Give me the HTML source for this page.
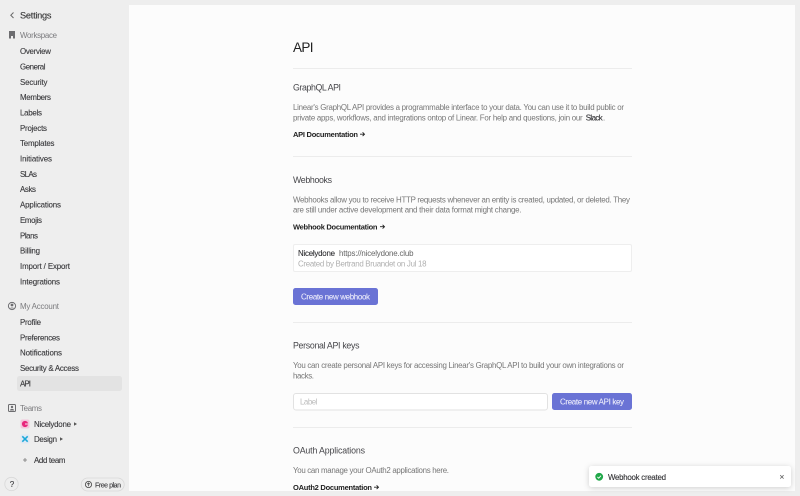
<!DOCTYPE html>
<html><head><meta charset="utf-8"><title>Settings</title>
<style>
html,body{margin:0;padding:0;width:800px;height:496px;overflow:hidden;background:#eeeeee}
svg{display:block;filter:blur(.35px)}
text{font-family:"Liberation Sans",sans-serif;font-size:7.9px;fill:#777}
.n{fill:#3a3a3d;stroke:#3a3a3d;stroke-width:.12px}
.s{fill:#7b7b7e}
.h{font-size:8.8px;fill:#46464a}
.b{font-size:7.5px;fill:#222;font-weight:bold}
.d{fill:#303033;stroke:#303033;stroke-width:.1px}
.w{fill:#e9e9fa;stroke:#e9e9fa;stroke-width:.1px}
.g{fill:#b0b0b0}
.t{filter:drop-shadow(0 1px 3px rgba(0,0,0,.18))}
</style></head><body>
<svg width="800" height="496" viewBox="0 0 800 496" xmlns="http://www.w3.org/2000/svg">
<rect width="800" height="496" fill="#eeeeee"/>
<rect x="129" y="5" width="666" height="486" fill="#fcfcfc"/>

<!-- Sidebar header -->
<path d="M13.5 12.5 L10.8 15.2 L13.5 18" fill="none" stroke="#666" stroke-width="1"/>
<text x="20" y="18.7" class="n" style="font-size:9.2px;fill:#333" textLength="31.5">Settings</text>

<!-- Workspace -->
<path d="M9 31h6v7.5h-2v-2.5h-2v2.5H9z" fill="#6d6d70"/>
<text x="20" y="38" class="s" textLength="37">Workspace</text>
<text x="20" y="54" class="n" textLength="31">Overview</text>
<text x="20" y="69.4" class="n" textLength="25.5">General</text>
<text x="20" y="84.8" class="n" textLength="27.5">Security</text>
<text x="20" y="100.2" class="n" textLength="31">Members</text>
<text x="20" y="115.5" class="n" textLength="22">Labels</text>
<text x="20" y="131" class="n" textLength="27">Projects</text>
<text x="20" y="146.2" class="n" textLength="34.5">Templates</text>
<text x="20" y="161.5" class="n" textLength="32">Initiatives</text>
<text x="20" y="177" class="n" textLength="17">SLAs</text>
<text x="20" y="192.2" class="n" textLength="16">Asks</text>
<text x="20" y="207.6" class="n" textLength="41">Applications</text>
<text x="20" y="223" class="n" textLength="22">Emojis</text>
<text x="20" y="238.3" class="n" textLength="18">Plans</text>
<text x="20" y="253.6" class="n" textLength="20">Billing</text>
<text x="20" y="269" class="n" textLength="50">Import / Export</text>
<text x="20" y="284.3" class="n" textLength="40">Integrations</text>

<!-- My Account -->
<circle cx="12" cy="306" r="3.6" fill="none" stroke="#6d6d70" stroke-width="1"/>
<circle cx="12" cy="305" r="1.4" fill="#6d6d70"/>
<path d="M9.8 308.4a2.6 2 0 0 1 4.4 0z" fill="#6d6d70"/>
<text x="20" y="309" class="s" textLength="39">My Account</text>
<text x="20" y="325" class="n" textLength="21">Profile</text>
<text x="20" y="340.3" class="n" textLength="40">Preferences</text>
<text x="20" y="355.6" class="n" textLength="42">Notifications</text>
<text x="20" y="371" class="n" textLength="59">Security &amp; Access</text>
<rect x="17" y="376" width="105" height="15" rx="2.5" fill="#e3e3e3"/>
<text x="20" y="386.3" class="n" textLength="11">API</text>

<!-- Teams -->
<rect x="8.5" y="404.5" width="7" height="7" rx="1" fill="none" stroke="#6d6d70" stroke-width="1"/>
<circle cx="12" cy="407" r="1.2" fill="#6d6d70"/>
<path d="M10 410.5a2 1.6 0 0 1 4 0z" fill="#6d6d70"/>
<text x="20" y="411" class="s" textLength="22">Teams</text>

<rect x="20.5" y="419.5" width="9" height="9" rx="2" fill="#f4c6dc"/>
<circle cx="25" cy="424" r="3.1" fill="#e8267c"/>
<rect x="25" y="423.4" width="3.4" height="1.2" fill="#f4c6dc"/>
<text x="34" y="427" class="n" textLength="37">Nicelydone</text>
<path d="M74 422.3l3 1.7-3 1.7z" fill="#555"/>

<rect x="20.5" y="434.5" width="9" height="9" rx="2" fill="#dfe8f4"/>
<path d="M22.3 436.3l5.4 5.4M27.7 436.3l-5.4 5.4" stroke="#1aa8d8" stroke-width="1.5" fill="none"/>
<text x="34" y="442" class="n" textLength="23">Design</text>
<path d="M60 437.3l3 1.7-3 1.7z" fill="#555"/>

<path d="M23 460h4M25 458v4" stroke="#777" stroke-width=".8"/>
<text x="34" y="463" class="n" textLength="31.5">Add team</text>

<circle cx="11.5" cy="484" r="6.7" fill="#eeeeee" stroke="#d8d8d8" stroke-width=".8"/>
<text x="9.8" y="487" class="n" style="font-size:8px">?</text>
<rect x="81.2" y="478" width="43" height="13" rx="6.5" fill="#eeeeee" stroke="#d8d8d8" stroke-width=".8"/>
<circle cx="88.5" cy="484.5" r="3.1" fill="none" stroke="#444" stroke-width=".8"/>
<path d="M88.5 486.3v-3.2M87 484.3l1.5-1.4 1.5 1.4" fill="none" stroke="#444" stroke-width=".7"/>
<text x="95" y="487.3" class="n" style="font-size:7px" textLength="26">Free plan</text>

<!-- Main -->
<text x="293" y="52" style="font-size:13.5px;fill:#222" textLength="20.5">API</text>
<rect x="293" y="68" width="339" height="1" fill="#ececec"/>

<text x="293" y="90.6" class="h" textLength="48">GraphQL API</text>
<text x="293" y="110" textLength="331">Linear's GraphQL API provides a programmable interface to your data. You can use it to build public or</text>
<text x="293" y="120.4" textLength="289.7">private apps, workflows, and integrations ontop of Linear. For help and questions, join our</text>
<text x="585.7" y="120.4" class="d" textLength="17">Slack</text>
<text x="603" y="120.4">.</text>
<text x="293" y="137" class="b" textLength="65">API Documentation</text>
<path d="M360 134.2h4.4M362.6 132.3l1.9 1.9-1.9 1.9" fill="none" stroke="#222" stroke-width=".9"/>
<rect x="293" y="156" width="339" height="1" fill="#ececec"/>

<text x="293" y="183" class="h" textLength="39">Webhooks</text>
<text x="293" y="202.5" textLength="337">Webhooks allow you to receive HTTP requests whenever an entity is created, updated, or deleted. They</text>
<text x="293" y="212.7" textLength="228.5">are still under active development and their data format might change.</text>
<text x="293" y="229.5" class="b" textLength="84.5">Webhook Documentation</text>
<path d="M380 226.7h4.4M382.6 224.8l1.9 1.9-1.9 1.9" fill="none" stroke="#222" stroke-width=".9"/>

<rect x="293.5" y="244.5" width="338" height="27" rx="1.5" fill="#fff" stroke="#eeeeee"/>
<text x="298" y="256" class="d" textLength="37">Nicelydone</text>
<text x="339" y="256" style="fill:#666" textLength="74.5">https://nicelydone.club</text>
<text x="298" y="266.4" class="g" textLength="128.5">Created by Bertrand Bruandet on Jul 18</text>

<rect x="293" y="288" width="85" height="17" rx="2.5" fill="#6a73d5"/>
<text x="301" y="299.5" class="w" textLength="69">Create new webhook</text>
<rect x="293" y="322" width="339" height="1" fill="#ececec"/>

<text x="293" y="348.6" class="h" textLength="66.5">Personal API keys</text>
<text x="293" y="368" textLength="331">You can create personal API keys for accessing Linear's GraphQL API to build your own integrations or</text>
<text x="293" y="378.3" textLength="21">hacks.</text>

<rect x="293.5" y="393.5" width="254" height="16.5" rx="2.5" fill="#fff" stroke="#e2e2e2"/>
<text x="300" y="404.7" style="fill:#bbb" textLength="17.5">Label</text>
<rect x="552" y="393" width="80" height="17" rx="2.5" fill="#6a73d5"/>
<text x="560" y="404.7" class="w" textLength="64">Create new API key</text>
<rect x="293" y="427" width="339" height="1" fill="#ececec"/>

<text x="293" y="453.6" class="h" textLength="72">OAuth Applications</text>
<text x="293" y="473" textLength="156">You can manage your OAuth2 applications here.</text>
<text x="293" y="490" class="b" textLength="79">OAuth2 Documentation</text>
<path d="M374 487.2h4.4M376.6 485.3l1.9 1.9-1.9 1.9" fill="none" stroke="#222" stroke-width=".9"/>
<rect x="129" y="491" width="500" height="5" fill="#eeeeee"/>

<!-- Toast -->
<rect class="t" x="589" y="466" width="202" height="21" rx="2.5" fill="#fff"/>
<circle cx="599.2" cy="476.8" r="3.9" fill="#21a84a"/>
<path d="M597.4 476.9l1.3 1.3 2.3-2.5" fill="none" stroke="#fff" stroke-width=".9"/>
<text x="608" y="479.8" class="d" textLength="58">Webhook created</text>
<path d="M780.2 475.2l3.4 3.4M783.6 475.2l-3.4 3.4" stroke="#666" stroke-width=".8"/>
</svg>
</body></html>
